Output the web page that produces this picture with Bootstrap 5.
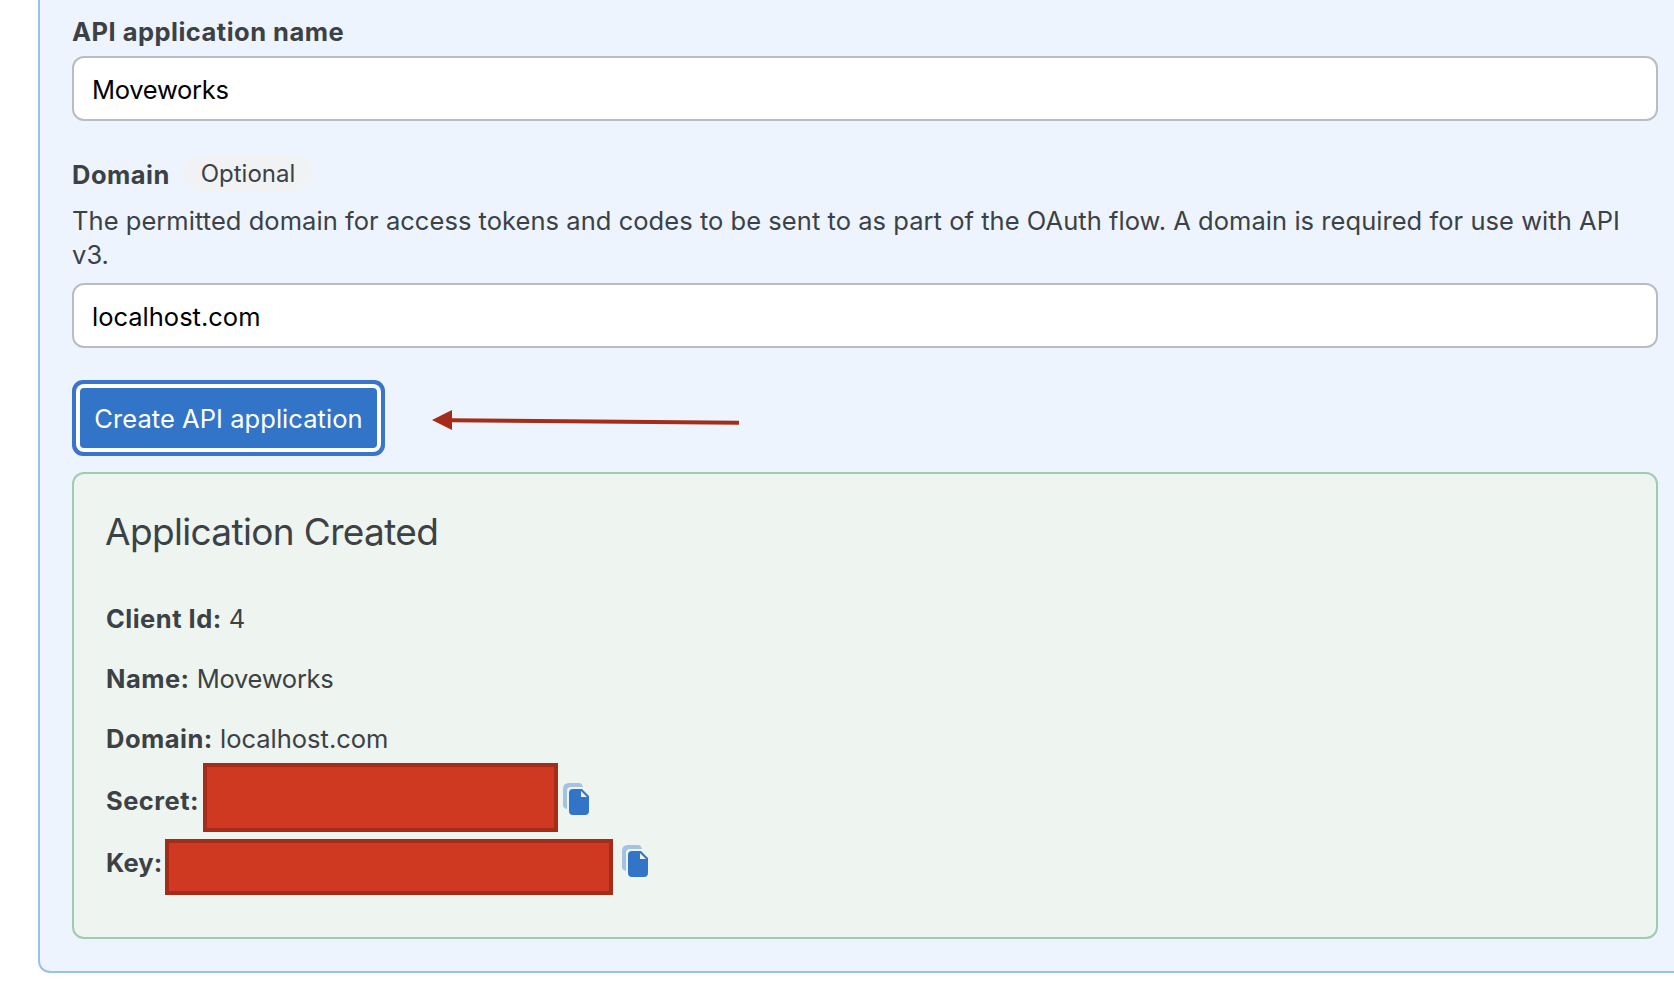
<!DOCTYPE html>
<html lang="en">
<head>
<meta charset="utf-8">
<meta name="viewport" content="width=device-width, initial-scale=1">
<title>API application</title>
<link href="https://cdn.jsdelivr.net/npm/bootstrap@5.3.0/dist/css/bootstrap.min.css" rel="stylesheet">
<style>
body { font-family: Inter, "Liberation Sans", sans-serif; font-size: 25.5px; line-height: 36px; color: #3c4146; background: #fff; overflow: hidden; }
strong, .form-label { font-weight: 700; letter-spacing: .48px; }
.app-panel { margin-left: 38px; height: 973px; padding: 14px 16px 0 32px; background: #edf4fd; border: 2px solid #9cc0ee; border-width: 0 0 2px 2px; border-radius: 0 0 0 12px; }
.form-label { display: block; margin: 0 0 6px; }
.form-control, .form-control:focus { height: 65px; padding: 1px 18px 0; border: 2px solid #b9bdc3; border-radius: 12px; font-size: 25.5px; color: #000; background: #fff; box-shadow: none; }
#name, .app-name { letter-spacing: -.28px; }
.domain-row { margin-top: 34px; height: 36px; }
.domain-row .form-label { margin: 0; padding-top: 2px; width: 97px; }
.optional-chip { margin-left: 15px; padding-top: 1px; width: 128px; height: 36px; border-radius: 18px; background: #f1f2f3; font-size: 24px; }
.form-text { margin: 13px 0 11px; font-size: 25.5px; line-height: 34px; letter-spacing: .045px; color: inherit; }
.create-btn, .create-btn:hover { width: 297px; height: 60px; margin: 8px; padding: 2px 0 0; border: 0; border-radius: 4px; background: #3275c8; color: #fff; font-size: 25.5px; letter-spacing: .05px; box-shadow: 0 0 0 4px #fff, 0 0 0 8px #3b75ca; white-space: nowrap; }
.action-row { margin-top: 32px; }
.arrow { margin: 4px 0 0 47px; }
.result { margin: 16px 0 0; height: 467px; padding: 36px 32px 0; border: 2px solid #9fcbae; border-radius: 12px; background: #eef4f0; }
.result h2 { margin: 0 0 35px -1px; font-size: 37px; line-height: 44px; font-weight: 400; letter-spacing: -.65px; }
.result p { margin: 0; line-height: 60px; }
.secret-row { height: 62px; line-height: 62px; }
.secret-row.first { margin-top: 1px; }
.redaction { flex: none; background: #cf3921; border: 4px solid #a52c18; }
.redact-secret { width: 355px; height: 69px; margin-top: -7px; }
.redact-key { width: 448px; height: 56px; margin-top: 7px; }
.secret-row strong { flex: none; }
.w-secret { width: 97px; }
.w-key { width: 59px; letter-spacing: .1px; }
.copy-icon { flex: none; margin: 13px 0 0 5px; }
.copy-icon.wide { margin-left: 9px; }
</style>
</head>
<body>
<main class="app-panel">
  <label class="form-label" for="name">API application name</label>
  <input class="form-control" id="name" type="text" value="Moveworks">
  <div class="domain-row d-flex">
    <label class="form-label" for="domain">Domain</label>
    <span class="optional-chip d-flex align-items-center justify-content-center">Optional</span>
  </div>
  <div class="form-text">The permitted domain for access tokens and codes to be sent to as part of the OAuth flow. A domain is required for use with API v3.</div>
  <input class="form-control" id="domain" type="text" value="localhost.com">
  <div class="action-row d-flex align-items-center">
    <button class="btn btn-primary create-btn" type="button">Create API application</button>
    <svg class="arrow" width="308" height="24" viewBox="0 0 308 24" aria-hidden="true"><path d="M19 12.2 307 14.8" stroke="#a52c18" stroke-width="4" fill="none"/><path d="M0 12 20 2v20z" fill="#a52c18"/></svg>
  </div>
  <section class="result">
    <h2>Application Created</h2>
    <p><strong>Client Id:</strong> 4</p>
    <p><strong>Name:</strong> <span class="app-name">Moveworks</span></p>
    <p><strong>Domain:</strong> localhost.com</p>
    <div class="secret-row first d-flex align-items-start">
      <strong class="w-secret">Secret:</strong><span class="redaction redact-secret"></span>
      <svg class="copy-icon" width="26" height="32" viewBox="0 0 26 32" aria-label="Copy secret"><path d="M4 26Q0 25 0 22V6Q0 0 6 0h10q3 0 4 4H8Q4 4 4 8z" fill="#a5c2e2"/><path fill-rule="evenodd" d="M10 6h9l7 7v15q0 4-4 4H10q-4 0-4-4V10q0-4 4-4zM18 8v6h6z" fill="#3275c8"/></svg>
    </div>
    <div class="secret-row d-flex align-items-start">
      <strong class="w-key">Key:</strong><span class="redaction redact-key"></span>
      <svg class="copy-icon wide" width="26" height="32" viewBox="0 0 26 32" aria-label="Copy key"><path d="M4 26Q0 25 0 22V6Q0 0 6 0h10q3 0 4 4H8Q4 4 4 8z" fill="#a5c2e2"/><path fill-rule="evenodd" d="M10 6h9l7 7v15q0 4-4 4H10q-4 0-4-4V10q0-4 4-4zM18 8v6h6z" fill="#3275c8"/></svg>
    </div>
  </section>
</main>
<script src="https://cdn.jsdelivr.net/npm/bootstrap@5.3.0/dist/js/bootstrap.bundle.min.js"></script>
</body>
</html>
